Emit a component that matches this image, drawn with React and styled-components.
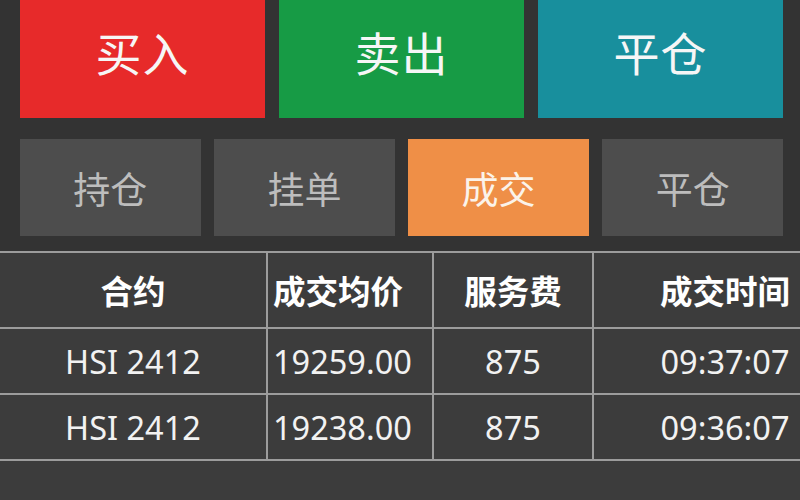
import React from "react"
import styled, { createGlobalStyle } from "styled-components"

const GlobalStyle = createGlobalStyle`
  html, body {
    margin: 0;
    padding: 0;
    background: #333333;
  }
  body {
    font-family: "Noto Sans", "Noto Sans CJK SC", sans-serif;
  }
`

const Page = styled.div`
  width: 800px;
  height: 500px;
  overflow: hidden;
  background: #333333;
`

const ActionRow = styled.div`
  display: grid;
  grid-template-columns: repeat(3, 1fr);
  column-gap: 14px;
  width: 763px;
  margin: -16px 0 0 20px;
`

const ActionButton = styled.div`
  height: 134px;
  display: flex;
  align-items: center;
  justify-content: center;
  background: ${props => props.color};
  color: #f6f6f6;
  font-size: 46px;
  letter-spacing: 1px;
`

const TabRow = styled.div`
  display: grid;
  grid-template-columns: repeat(4, 1fr);
  column-gap: 13.5px;
  width: 763px;
  margin: 21px 0 0 20px;
`

const Tab = styled.div`
  height: 97px;
  display: flex;
  align-items: center;
  justify-content: center;
  font-size: 37px;
  background: ${props => (props.active ? "#ef8f47" : "#4d4d4d")};
  color: ${props => (props.active ? "#fbf3ea" : "#bdbdbd")};
`

const Table = styled.div`
  margin-top: 15px;
  width: 856px;
  background: #3c3c3c;
  border-top: 2px solid #9c9c9c;
  height: 260px;
`

const Row = styled.div`
  display: grid;
  grid-template-columns: 266px 166px 160px 264px;
  height: ${props => (props.head ? "74px" : "64px")};
  border-bottom: 2px solid #9c9c9c;
`

const Cell = styled.div`
  display: flex;
  align-items: center;
  justify-content: ${props => (props.left ? "flex-start" : "center")};
  padding-left: ${props => (props.left ? "5px" : "0")};
  white-space: nowrap;
  border-left: ${props => (props.first ? "none" : "2px solid #9c9c9c")};
  color: ${props => (props.head ? "#ffffff" : "#f2f2f2")};
  font-size: 32.5px;
  font-weight: ${props => (props.head ? 700 : 400)};
`

const headers = ["合约", "成交均价", "服务费", "成交时间"]

const trades = [
  ["HSI 2412", "19259.00", "875", "09:37:07"],
  ["HSI 2412", "19238.00", "875", "09:36:07"],
]

const tabs = ["持仓", "挂单", "成交", "平仓"]

export default function App() {
  return (
    <Page>
      <GlobalStyle />
      <ActionRow>
        <ActionButton color="#e72a2a">买入</ActionButton>
        <ActionButton color="#179b45">卖出</ActionButton>
        <ActionButton color="#188f9d">平仓</ActionButton>
      </ActionRow>
      <TabRow>
        {tabs.map(t => (
          <Tab key={t} active={t === "成交"}>{t}</Tab>
        ))}
      </TabRow>
      <Table>
        <Row head>
          {headers.map((h, i) => (
            <Cell key={h} head first={i === 0} left={i === 1}>{h}</Cell>
          ))}
        </Row>
        {trades.map((row, r) => (
          <Row key={r}>
            {row.map((v, i) => (
              <Cell key={i} first={i === 0} left={i === 1}>{v}</Cell>
            ))}
          </Row>
        ))}
      </Table>
    </Page>
  )
}
